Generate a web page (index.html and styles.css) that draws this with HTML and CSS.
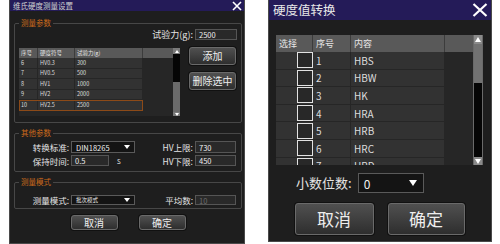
FILE: index.html
```html
<!DOCTYPE html>
<html lang="zh">
<head>
  <meta charset="UTF-8" />
  <title>硬度测量设置</title>
  <link rel="stylesheet" href="styles.css">
</head>
<body>
  <div class="screen">

    <!-- Vickers settings dialog -->
    <div class="dialog dialog-hv">
      <div class="titlebar">
        <span class="title">维氏硬度测量设置</span>
        <svg class="close" viewBox="0 0 10 10"><path d="M1 1 L9 9 M9 1 L1 9" stroke="#fff" stroke-width="1.6"/></svg>
      </div>
      <div class="body">
        <div class="group group-params">
          <div class="group-title">测量参数</div>
          <div class="force-row">
            <span class="label">试验力(g):</span>
            <div class="field field-force">2500</div>
          </div>
          <div class="params-main">
            <div class="grid-wrap">
              <div class="grid">
                <div class="row head">
                  <div class="cells"><span>序号</span><span>硬度符号</span><span>试验力(g)</span></div>
                  <div class="rest"></div>
                </div>
                <div class="row"><div class="cells"><span>6</span><span>HV0.3</span><span>300</span></div></div>
                <div class="row"><div class="cells"><span>7</span><span>HV0.5</span><span>500</span></div></div>
                <div class="row"><div class="cells"><span>8</span><span>HV1</span><span>1000</span></div></div>
                <div class="row"><div class="cells"><span>9</span><span>HV2</span><span>2000</span></div></div>
                <div class="row"><div class="cells selected"><span>10</span><span>HV2.5</span><span>2500</span></div></div>
              </div>
              <div class="scrollbar">
                <div class="sb-btn"><i class="tri-up"></i></div>
                <div class="sb-track"></div>
                <div class="sb-thumb"></div>
                <div class="sb-btn sb-down"><i class="tri-down"></i></div>
              </div>
            </div>
            <div class="side-buttons">
              <button class="btn">添加</button>
              <button class="btn">删除选中</button>
            </div>
          </div>
        </div>

        <div class="group group-other">
          <div class="group-title">其他参数</div>
          <div class="form-row row-1">
            <span class="label">转换标准:</span>
            <div class="select">DIN18265<i class="caret"></i></div>
            <span class="label">HV上限:</span>
            <div class="field">730</div>
          </div>
          <div class="form-row row-2">
            <span class="label">保持时间:</span>
            <div class="inline"><div class="field field-time">0.5</div><span class="unit">s</span></div>
            <span class="label">HV下限:</span>
            <div class="field">450</div>
          </div>
        </div>

        <div class="group group-mode">
          <div class="group-title">测量模式</div>
          <div class="form-row row-mode">
            <span class="label">测量模式:</span>
            <div class="select select-small">批次模式<i class="caret"></i></div>
            <span class="label">平均数:</span>
            <div class="field disabled">10</div>
          </div>
        </div>

        <div class="footer">
          <button class="btn">取消</button>
          <button class="btn">确定</button>
        </div>
      </div>
    </div>

    <!-- Hardness conversion dialog -->
    <div class="dialog dialog-convert">
      <div class="titlebar">
        <span class="title">硬度值转换</span>
        <svg class="close" viewBox="0 0 16 14"><path d="M1.5 1 L14.5 13 M14.5 1 L1.5 13" stroke="#fff" stroke-width="2.2"/></svg>
      </div>
      <div class="body">
        <div class="grid-wrap">
          <div class="grid">
            <div class="row head">
              <div class="cells"><span>选择</span><span>序号</span><span>内容</span></div>
              <div class="rest"></div>
            </div>
            <div class="row"><div class="cells"><span class="check-cell"><i class="check"></i></span><span>1</span><span>HBS</span></div></div>
            <div class="row"><div class="cells"><span class="check-cell"><i class="check"></i></span><span>2</span><span>HBW</span></div></div>
            <div class="row"><div class="cells"><span class="check-cell"><i class="check"></i></span><span>3</span><span>HK</span></div></div>
            <div class="row"><div class="cells"><span class="check-cell"><i class="check"></i></span><span>4</span><span>HRA</span></div></div>
            <div class="row"><div class="cells"><span class="check-cell"><i class="check"></i></span><span>5</span><span>HRB</span></div></div>
            <div class="row"><div class="cells"><span class="check-cell"><i class="check"></i></span><span>6</span><span>HRC</span></div></div>
            <div class="row"><div class="cells"><span class="check-cell"><i class="check"></i></span><span>7</span><span>HRD</span></div></div>
          </div>
          <div class="scrollbar">
            <div class="sb-btn"><i class="tri-up"></i></div>
            <div class="sb-thumb"></div>
            <div class="sb-track"></div>
            <div class="sb-btn sb-down"><i class="tri-down"></i></div>
          </div>
        </div>

        <div class="decimal-row">
          <span class="label">小数位数:</span>
          <div class="select">0<i class="caret"></i></div>
        </div>

        <div class="footer">
          <button class="btn btn-cancel">取消</button>
          <button class="btn btn-ok">确定</button>
        </div>
      </div>
    </div>

  </div>
</body>
</html>
```

FILE: styles.css
```css
/* Reset */
* {
  box-sizing: border-box;
  margin: 0;
  padding: 0;
}

body {
  background: #fff;
  font-family: "Noto Sans CJK SC", "Noto Sans", sans-serif;
  color: #ddd;
  width: 500px;
  height: 244px;
  overflow: hidden;
}

.screen {
  display: flex;
  align-items: flex-start;
  padding-left: 9px;
}

/* Dialog frame */
.dialog {
  background: #1e1e1e;
  border: 1px solid #4a4a4a;
  border-top: 0;
}

.titlebar {
  display: flex;
  align-items: center;
  justify-content: space-between;
  background: #241b58;
  color: #e8e8e8;
}

.btn {
  font-family: inherit;
  color: #eee;
  background: linear-gradient(#505050, #2e2e2e);
  border: 1px solid #6a6a6a;
  border-radius: 3px;
  box-shadow: 0 0 0 1px #111;
  cursor: pointer;
}

.label {
  white-space: nowrap;
  color: #e4e4e4;
}

.field {
  background: #292929;
  border: 1px solid #555;
  color: #eee;
  padding-left: 3px;
  white-space: nowrap;
}

.field.disabled {
  color: #6e6e6e;
}

.select {
  position: relative;
  display: flex;
  align-items: center;
  background: #141414;
  border: 1px solid #5a5a5a;
  color: #f0f0f0;
  padding-left: 4px;
}

.caret {
  position: absolute;
  right: 6px;
  top: 50%;
  transform: translateY(-50%);
  border-left: 4px solid transparent;
  border-right: 4px solid transparent;
  border-top: 6px solid #fff;
}

/* Grid / table */
.grid-wrap {
  display: flex;
  background: #262626;
  overflow: hidden;
}

.grid {
  flex: 1;
  overflow: hidden;
}

.row {
  display: flex;
}

.row .cells {
  display: grid;
  background: #323232;
}

.row .cells span {
  display: flex;
  align-items: center;
  white-space: nowrap;
  border-right: 1px solid #262626;
  border-bottom: 1px solid #262626;
  color: #ddd;
}

.row.head {
  background: #595959;
}

.row.head .cells {
  background: #595959;
}

.row.head .cells span {
  border-right-color: #3c3c3c;
  border-bottom: 0;
  color: #e6e6e6;
}

.row.head .rest {
  flex: 1;
  border-left: 0;
}

.cells.selected {
  outline: 1px solid #8c4a18;
  outline-offset: -1px;
}

.scrollbar {
  display: flex;
  flex-direction: column;
  background: #000;
}

.sb-btn {
  display: flex;
  align-items: center;
  justify-content: center;
  background: #7a7a7a;
}

.sb-track {
  flex: 1;
  background: #050505;
}

.sb-thumb {
  background: #6a6a6a;
}

.tri-up,
.tri-down {
  border-left: 2px solid transparent;
  border-right: 2px solid transparent;
}

.tri-up {
  border-bottom: 3px solid #fff;
}

.tri-down {
  border-top: 3px solid #fff;
}

/* ---------- Vickers settings dialog ---------- */
.dialog-hv {
  width: 236px;
  height: 244px;
  font-size: 9px;
}

.dialog-hv .titlebar {
  height: 11px;
  padding: 0 2px 0 3px;
}

.dialog-hv .title {
  font-size: 7.5px;
  line-height: 11px;
  color: #cfcfcf;
}

.dialog-hv .close {
  width: 10px;
  height: 10px;
}

.dialog-hv .body {
  padding: 0 2px 0 4px;
}

.group {
  border: 1px solid #474747;
  border-radius: 2px;
  padding: 0 4px 0 4px;
}

.group-title {
  width: max-content;
  height: 10px;
  margin: -6px 0 0 0;
  padding: 0 2px;
  background: #1e1e1e;
  color: #cc6a1c;
  font-size: 7.5px;
  line-height: 10px;
}

.group-params {
  margin-top: 12px;
  padding-bottom: 6px;
}

.force-row {
  display: flex;
  justify-content: flex-end;
  align-items: center;
  gap: 2px;
  height: 11px;
  margin-top: 1px;
  line-height: 11px;
}

.dialog-hv .field {
  font-size: 7.5px;
  line-height: 9px;
  display: flex;
  align-items: center;
}

.field-force {
  width: 42px;
  height: 11px;
}

.params-main {
  display: flex;
  gap: 9px;
  margin-top: 7px;
}

.dialog-hv .grid-wrap {
  width: 161px;
  height: 68px;
  margin-top: 1px;
}

.dialog-hv .row {
  height: 10.5px;
}

.dialog-hv .row.head {
  height: 10px;
}

.dialog-hv .row .cells {
  grid-template-columns: 19px 37px 68px;
}

.dialog-hv .row .cells span {
  font-size: 5.5px;
  padding-left: 2px;
}

.dialog-hv .scrollbar {
  width: 7px;
}

.dialog-hv .sb-btn {
  height: 6px;
}

.dialog-hv .sb-down {
  height: 4px;
}

.dialog-hv .sb-thumb {
  height: 30px;
}

.side-buttons {
  display: flex;
  flex-direction: column;
  gap: 7px;
}

.side-buttons .btn {
  width: 47px;
  height: 18px;
  font-size: 10px;
  line-height: 16px;
}

.group-other {
  margin-top: 10px;
  padding-bottom: 5px;
}

.form-row {
  display: grid;
  grid-template-columns: 50px 64px 56px 41px;
  column-gap: 2px;
  align-items: center;
}

.form-row .label {
  text-align: right;
  font-size: 8.5px;
  line-height: 10px;
}

.row-1 {
  margin-top: 3px;
  height: 12px;
}

.row-1 .select,
.row-1 .field {
  height: 12px;
}

.row-2 {
  margin-top: 2px;
  height: 11px;
}

.row-2 .field {
  height: 11px;
}

.dialog-hv .select {
  font-size: 7.5px;
  line-height: 9px;
  padding-left: 4px;
}

.dialog-hv .caret {
  right: 4px;
  border-left-width: 3px;
  border-right-width: 3px;
  border-top-width: 4px;
}

.inline {
  display: flex;
  align-items: center;
}

.field-time {
  width: 38px;
}

.unit {
  margin-left: 8px;
  font-size: 8px;
}

.group-mode {
  margin-top: 10px;
  padding-bottom: 3px;
}

.row-mode {
  margin-top: 8px;
  height: 10px;
}

.row-mode .select,
.row-mode .field {
  height: 10px;
}

.select-small {
  font-size: 5.5px !important;
}

.dialog-hv .footer {
  display: flex;
  justify-content: center;
  gap: 21px;
  margin-top: 6px;
}

.dialog-hv .footer .btn {
  width: 47px;
  height: 15px;
  font-size: 10px;
  line-height: 13px;
}

/* ---------- Conversion dialog ---------- */
.dialog-convert {
  width: 224px;
  height: 242px;
  margin-left: 23px;
}

.dialog-convert .titlebar {
  height: 20px;
  padding: 0 3px 0 4px;
}

.dialog-convert .title {
  font-size: 12.5px;
  line-height: 20px;
}

.dialog-convert .close {
  width: 16px;
  height: 14px;
}

.dialog-convert .body {
  padding: 0 8px 0 7px;
}

.dialog-convert .grid-wrap {
  height: 130px;
  margin-top: 15px;
}

.dialog-convert .row {
  height: 17.6px;
  flex-shrink: 0;
}

.dialog-convert .row.head {
  height: 17px;
}

.dialog-convert .row .cells {
  grid-template-columns: 37px 38px 94px;
}

.dialog-convert .row .cells span {
  font-size: 10px;
  padding-left: 3px;
}

.dialog-convert .row.head .cells span {
  font-size: 9px;
}

.dialog-convert .row .cells .check-cell {
  justify-content: flex-end;
  padding: 0;
  border-right: 0;
}

.check {
  display: block;
  width: 16px;
  height: 16px;
  border: 1.5px solid #e2e2e2;
  background: #282828;
}

.dialog-convert .scrollbar {
  width: 10px;
  border-left: 1px solid #6a6a6a;
  border-right: 1px solid #6a6a6a;
}

.dialog-convert .sb-btn {
  height: 9px;
  background: #8a8a8a;
}

.dialog-convert .sb-down {
  height: 8px;
}

.dialog-convert .sb-thumb {
  height: 39px;
  background: #727272;
}

.dialog-convert .tri-up,
.dialog-convert .tri-down {
  border-left-width: 3px;
  border-right-width: 3px;
}

.dialog-convert .tri-up {
  border-bottom-width: 5px;
}

.dialog-convert .tri-down {
  border-top-width: 5px;
}

.decimal-row {
  display: flex;
  align-items: center;
  gap: 6px;
  height: 20px;
  margin-top: 8px;
  padding-left: 20px;
}

.decimal-row .label {
  font-size: 13px;
  line-height: 20px;
}

.decimal-row .select {
  width: 66px;
  height: 20px;
  font-size: 12px;
  padding-left: 5px;
}

.dialog-convert .footer {
  display: flex;
  justify-content: center;
  gap: 14px;
  margin-top: 10px;
}

.dialog-convert .footer .btn {
  height: 32px;
  font-size: 17px;
  line-height: 28px;
}

.btn-cancel {
  width: 79px;
}

.btn-ok {
  width: 77px;
}
```
